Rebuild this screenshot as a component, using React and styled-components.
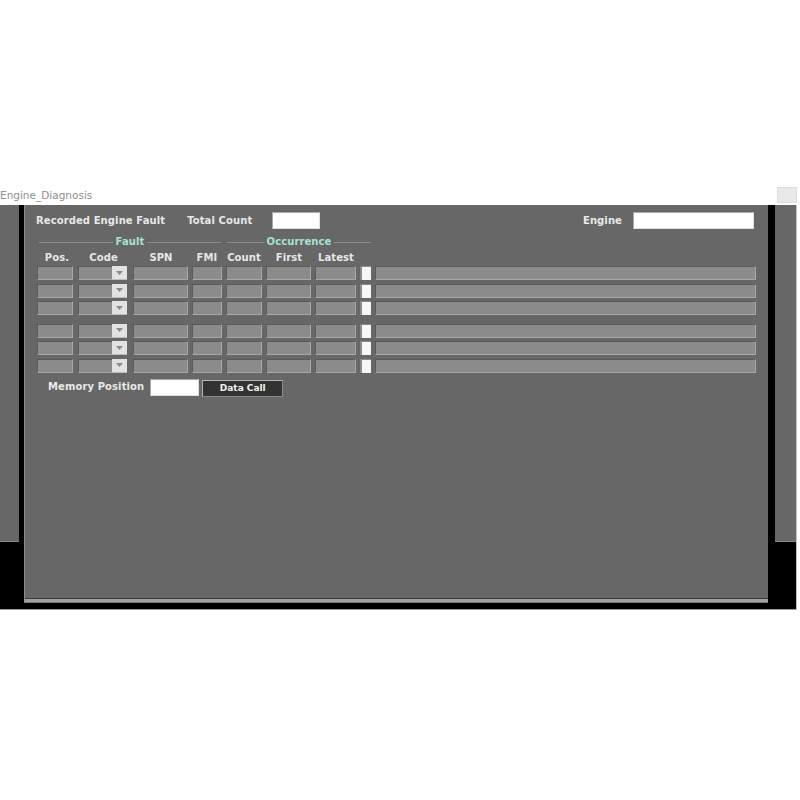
import React from "react";
import styled, { createGlobalStyle } from "styled-components";

const Global = createGlobalStyle`
  html, body { margin: 0; padding: 0; background: #ffffff; }
  body { font-family: "DejaVu Sans", Verdana, sans-serif; }
`;

const Page = styled.div`
  width: 800px;
  height: 800px;
  background: #ffffff;
`;

const Header = styled.div`
  height: 205px;
  display: flex;
  justify-content: space-between;
  align-items: flex-end;
`;

const Title = styled.div`
  font-size: 10.5px;
  line-height: 12px;
  color: #8e8e8e;
  padding-bottom: 4px;
`;

const CornerBox = styled.div`
  width: 18px;
  height: 14px;
  margin-right: 3px;
  margin-bottom: 2px;
  background: #e8e8e8;
  border: 1px solid #dcdcdc;
`;

const Frame = styled.div`
  width: 796px;
  height: 404px;
  display: flex;
  align-items: flex-start;
  background: #000000;
  border-right: 1px solid #c4c4c4;
  border-bottom: 1px solid #9a9a9a;
`;

const SideStrip = styled.div`
  width: ${(p) => p.$w}px;
  height: 336px;
  background: #676767;
  border-bottom: 1px solid #8a8a8a;
  margin-left: ${(p) => p.$ml || 0}px;
`;

const Panel = styled.div`
  width: 743px;
  height: 398px;
  margin-left: 5px;
  border-left: 1px solid #8c8c8c;
  display: flex;
  flex-direction: column;
`;

const PanelBody = styled.div`
  flex: 1;
  background: #676767;
  display: flex;
  flex-direction: column;
`;

const PanelFoot = styled.div`
  height: 3px;
  background: #a2a2a2;
  border-top: 1px solid #3c3c3c;
  border-bottom: 1px solid #7a7a7a;
`;

const TopRow = styled.div`
  display: flex;
  align-items: center;
  height: 17px;
  margin-top: 7px;
  padding-left: 11px;
  padding-right: 14px;
`;

const Label = styled.span`
  font-size: 10px;
  letter-spacing: 0.1px;
  line-height: 12px;
  font-weight: bold;
  color: #e8e8e8;
  white-space: nowrap;
  margin-left: ${(p) => p.$ml || 0}px;
  ${(p) => (p.$auto ? "margin-left: auto;" : "")}
`;

const WhiteInput = styled.div`
  width: ${(p) => p.$w}px;
  height: 17px;
  box-sizing: border-box;
  margin-left: ${(p) => p.$ml || 0}px;
  background: #ffffff;
  border-top: 1px solid #a8a8a8;
  border-left: 1px solid #a8a8a8;
  border-bottom: 1px solid #e0e0e0;
  border-right: 1px solid #e0e0e0;
`;

const GroupRow = styled.div`
  display: flex;
  margin-top: 7px;
  padding-left: 14px;
  height: 12px;
`;

const Group = styled.div`
  width: ${(p) => p.$w}px;
  margin-left: ${(p) => p.$ml || 0}px;
  display: flex;
  align-items: center;
  &::before, &::after {
    content: "";
    flex: 1;
    height: 1px;
    background: #8e8e8e;
  }
`;

const Legend = styled.span`
  font-size: 10px;
  letter-spacing: 0.1px;
  line-height: 12px;
  font-weight: bold;
  color: #a6e2d2;
  padding: 0 3px;
`;

const HeadRow = styled.div`
  display: flex;
  margin-top: 4px;
  padding-left: 12px;
  height: 12px;
`;

const HeadCell = styled.div`
  width: ${(p) => p.$w}px;
  margin-left: ${(p) => p.$ml}px;
  font-size: 10px;
  letter-spacing: 0.1px;
  line-height: 12px;
  font-weight: bold;
  color: #e6e6e6;
  white-space: nowrap;
  display: flex;
  justify-content: center;
  padding-left: ${(p) => p.$shift || 0}px;
  box-sizing: border-box;
`;

const Rows = styled.div`
  display: flex;
  flex-direction: column;
  gap: 3.5px;
  margin-top: ${(p) => p.$mt}px;
`;

const Row = styled.div`
  display: flex;
  padding-left: 12px;
  height: 14px;
`;

const Field = styled.div`
  width: ${(p) => p.$w}px;
  margin-left: ${(p) => p.$ml}px;
  height: 14px;
  box-sizing: border-box;
  background: #8b8b8b;
  border-top: 1px solid #5a5a5a;
  border-left: 1px solid #5a5a5a;
  border-bottom: 1px solid #a8a8a8;
  border-right: 1px solid #a8a8a8;
`;

const Combo = styled.div`
  width: ${(p) => p.$w}px;
  margin-left: ${(p) => p.$ml}px;
  height: 14px;
  display: flex;
`;

const ComboField = styled.div`
  flex: 1;
  box-sizing: border-box;
  background: #8b8b8b;
  border-top: 1px solid #5a5a5a;
  border-left: 1px solid #5a5a5a;
  border-bottom: 1px solid #a8a8a8;
`;

const ComboButton = styled.div`
  width: 15px;
  box-sizing: border-box;
  background: #e2e2e2;
  border-bottom: 1px solid #bdbdbd;
  display: flex;
  align-items: center;
  justify-content: center;
`;

const Check = styled.div`
  width: ${(p) => p.$w}px;
  margin-left: ${(p) => p.$ml}px;
  height: 14px;
  box-sizing: border-box;
  background: #f6f6f6;
  border-left: 2px solid #8a8a8a;
  border-top: 1px solid #8a8a8a;
`;

const MemoryRow = styled.div`
  display: flex;
  align-items: center;
  margin-top: 5px;
  padding-left: 23px;
  height: 19px;
`;

const CallButton = styled.div`
  width: 81px;
  height: 17px;
  margin-left: 3px;
  margin-top: 2px;
  box-sizing: border-box;
  background: #333333;
  border: 1px solid #b4b4b4;
  border-right-color: #8a8a8a;
  border-bottom-color: #8a8a8a;
  color: #f0f0f0;
  font-size: 9px;
  font-weight: bold;
  display: flex;
  align-items: center;
  justify-content: center;
`;

const columns = [
  { key: "pos", label: "Pos.", w: 36, ml: 0, shift: 4, type: "field" },
  { key: "code", label: "Code", w: 49, ml: 5, shift: 2, type: "combo" },
  { key: "spn", label: "SPN", w: 55, ml: 6, shift: 1, type: "field" },
  { key: "fmi", label: "FMI", w: 30, ml: 4, shift: 0, type: "field" },
  { key: "count", label: "Count", w: 36, ml: 4, shift: 0, type: "field" },
  { key: "first", label: "First", w: 45, ml: 4, shift: 1, type: "field" },
  { key: "latest", label: "Latest", w: 41, ml: 4, shift: 1, type: "field" },
  { key: "check", label: "", w: 11, ml: 4, type: "check" },
  { key: "desc", label: "", w: 381, ml: 4, type: "field" },
];

const Arrow = () => (
  <svg width="7" height="4" viewBox="0 0 7 4">
    <path d="M0 0 L7 0 L3.5 4 Z" fill="#8a8a8a" />
  </svg>
);

function FaultRow() {
  return (
    <Row>
      {columns.map((c) => {
        if (c.type === "combo")
          return (
            <Combo key={c.key} $w={c.w} $ml={c.ml}>
              <ComboField />
              <ComboButton>
                <Arrow />
              </ComboButton>
            </Combo>
          );
        if (c.type === "check") return <Check key={c.key} $w={c.w} $ml={c.ml} />;
        return <Field key={c.key} $w={c.w} $ml={c.ml} />;
      })}
    </Row>
  );
}

export default function App() {
  return (
    <Page>
      <Global />
      <Header>
        <Title>Engine_Diagnosis</Title>
        <CornerBox />
      </Header>
      <Frame>
        <SideStrip $w={19} />
        <Panel>
          <PanelBody>
            <TopRow>
              <Label>Recorded Engine Fault</Label>
              <Label $ml={22}>Total Count</Label>
              <WhiteInput $w={48} $ml={20} />
              <Label $auto>Engine</Label>
              <WhiteInput $w={121} $ml={11} />
            </TopRow>
            <GroupRow>
              <Group $w={182}>
                <Legend>Fault</Legend>
              </Group>
              <Group $w={144} $ml={6}>
                <Legend>Occurrence</Legend>
              </Group>
            </GroupRow>
            <HeadRow>
              {columns.slice(0, 7).map((c) => (
                <HeadCell key={c.key} $w={c.w} $ml={c.ml} $shift={c.shift}>
                  {c.label}
                </HeadCell>
              ))}
            </HeadRow>
            <Rows $mt={2}>
              <FaultRow />
              <FaultRow />
              <FaultRow />
            </Rows>
            <Rows $mt={8.5}>
              <FaultRow />
              <FaultRow />
              <FaultRow />
            </Rows>
            <MemoryRow>
              <Label>Memory Position</Label>
              <WhiteInput $w={49} $ml={6} />
              <CallButton>Data Call</CallButton>
            </MemoryRow>
          </PanelBody>
          <PanelFoot />
        </Panel>
        <SideStrip $w={21} $ml={7} />
      </Frame>
    </Page>
  );
}
